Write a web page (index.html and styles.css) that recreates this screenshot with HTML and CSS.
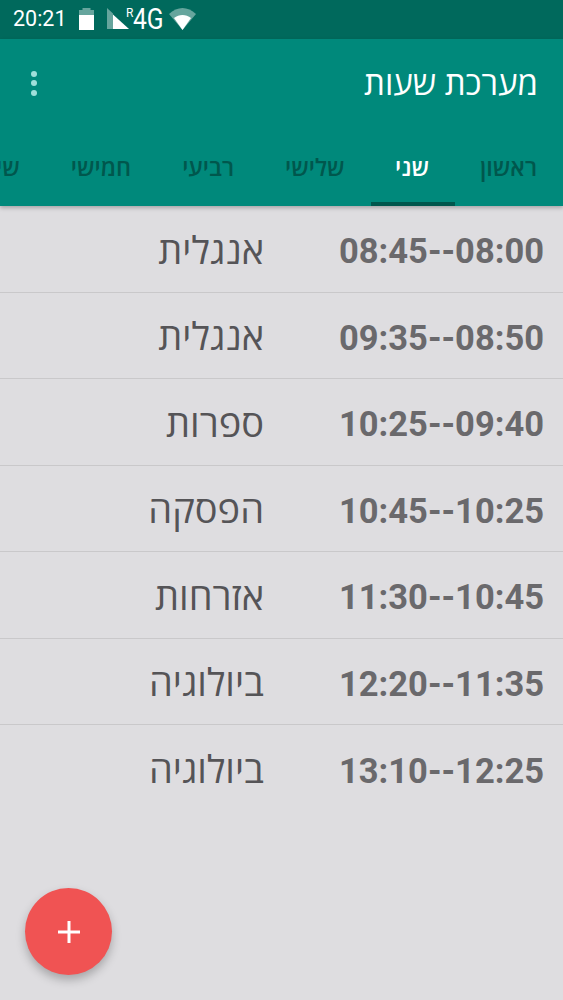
FILE: index.html
```html
<!DOCTYPE html>
<html lang="he">
<head>
<meta charset="utf-8">
<title>מערכת שעות</title>
<link rel="stylesheet" href="styles.css">
</head>
<body>
<div class="status">
  <span class="clock">20:21</span>
  <svg class="battery" width="15" height="22" viewBox="0 0 15 22"><path fill="#fff" fill-opacity=".4" d="M3.500 0h8v2H15v6H0V2h3.500z"/><path fill="#fff" d="M0 7h15v15H0z"/></svg>
  <svg class="signal" width="22" height="22" viewBox="0 0 22 22"><path fill="#fff" fill-opacity=".4" d="M0 0l6 5.500V21H0z"/><path fill="#fff" d="M6 6.500L22 21H6z"/></svg>
  <span class="net"><span class="roam">R</span><span class="netg">4G</span></span>
  <svg class="wifi" width="27" height="22" viewBox="0 0 27 22"><path fill="#fff" fill-opacity=".4" d="M0 6C4 2 9 0 13.500 0S23 2 27 6L13.500 22z"/><path fill="#fff" d="M5 10c2.500-2 5.500-3 8.500-3s6 1 8.500 3L13.500 22z"/></svg>
</div>
<header class="appbar">
  <div class="toolbar">
    <h1 class="title">מערכת שעות</h1>
    <div class="more"><i></i><i></i><i></i></div>
  </div>
  <nav class="tabs">
    <span class="tab">ראשון</span>
    <span class="tab active">שני</span>
    <span class="tab">שלישי</span>
    <span class="tab">רביעי</span>
    <span class="tab">חמישי</span>
    <span class="tab">שישי</span>
  </nav>
</header>
<main class="list">
  <div class="row"><span class="time">08:00--08:45</span><span class="subject">אנגלית</span></div>
  <div class="row"><span class="time">08:50--09:35</span><span class="subject">אנגלית</span></div>
  <div class="row"><span class="time">09:40--10:25</span><span class="subject">ספרות</span></div>
  <div class="row"><span class="time">10:25--10:45</span><span class="subject">הפסקה</span></div>
  <div class="row"><span class="time">10:45--11:30</span><span class="subject">אזרחות</span></div>
  <div class="row"><span class="time">11:35--12:20</span><span class="subject">ביולוגיה</span></div>
  <div class="row last"><span class="time">12:25--13:10</span><span class="subject">ביולוגיה</span></div>
</main>
<button class="fab" type="button"><svg width="24" height="24" viewBox="0 0 24 24"><path fill="#fff" d="M10.500 1h3v9.500H23v3h-9.500V23h-3v-9.500H1v-3h9.500z"/></svg></button>
</body>
</html>
```
FILE: styles.css
```css
* { box-sizing: border-box; }
html, body { margin: 0; height: 1000px; overflow: hidden; }
body { position: relative; background: #dedde0; font-family: "Open Sans", "Noto Sans", sans-serif; }

.status { height: 39px; background: #00695c; color: #fff; display: flex; align-items: flex-start; padding: 8px 0 0 13px; }
.clock { font: 400 21.500px/22px "Roboto", sans-serif; width: 66px; }
.battery { flex: none; }
.signal { flex: none; margin-left: 13px; }
.net { position: relative; width: 41px; height: 22px; flex: none; }
.netg { position: absolute; left: 4px; top: -1px; font: 400 29px/24px "Roboto", sans-serif; transform: scaleX(.85); transform-origin: left; }
.roam { position: absolute; left: -3px; top: -1px; font: 400 12px/12px "Roboto", sans-serif; }
.wifi { flex: none; margin-left: -1px; }

.appbar { height: 167px; background: #00897b; position: relative; z-index: 1; box-shadow: 0 2px 4px rgba(0,0,0,.25); overflow: hidden; }
.toolbar { height: 87px; display: flex; direction: rtl; align-items: center; justify-content: space-between; padding: 0 25px 0 24px; }
.title { margin: 0; color: #fff; font-size: 33px; font-weight: 400; line-height: 87px; }
.more { display: flex; flex-direction: column; gap: 3.500px; width: 20px; align-items: center; margin-top: 1px; }
.more i { width: 6px; height: 6px; border-radius: 50%; background: #9fe0da; }

.tabs { direction: rtl; display: flex; height: 80px; }
.tab { flex: none; padding: 21px 26px 0 25px; height: 80px; color: #00574d; font-size: 23.500px; font-weight: 600; line-height: 40px; border-bottom: 4px solid transparent; white-space: nowrap; }
.tab.active { color: #fff; border-bottom-color: #00574d; padding-left: 24.500px; }

.list { direction: rtl; }
.row { height: 86.500px; display: flex; align-items: center; padding: 0 19px 0 0; border-bottom: 1px solid #c9c8ca; }
.row.last { border-bottom: 0; }
.time { width: 204px; flex: none; margin-top: 5px; font: 700 34.500px/46px "Roboto", sans-serif; color: #6a696c; white-space: nowrap; }
.subject { margin-right: 76px; font-size: 38px; color: #555457; line-height: 46px; white-space: nowrap; }

.fab { position: absolute; left: 25px; top: 888px; width: 87px; height: 87px; padding: 0; border: 0; border-radius: 50%; background: #f05353; display: flex; align-items: center; justify-content: center; box-shadow: 0 5px 10px rgba(0,0,0,.25); }
```
